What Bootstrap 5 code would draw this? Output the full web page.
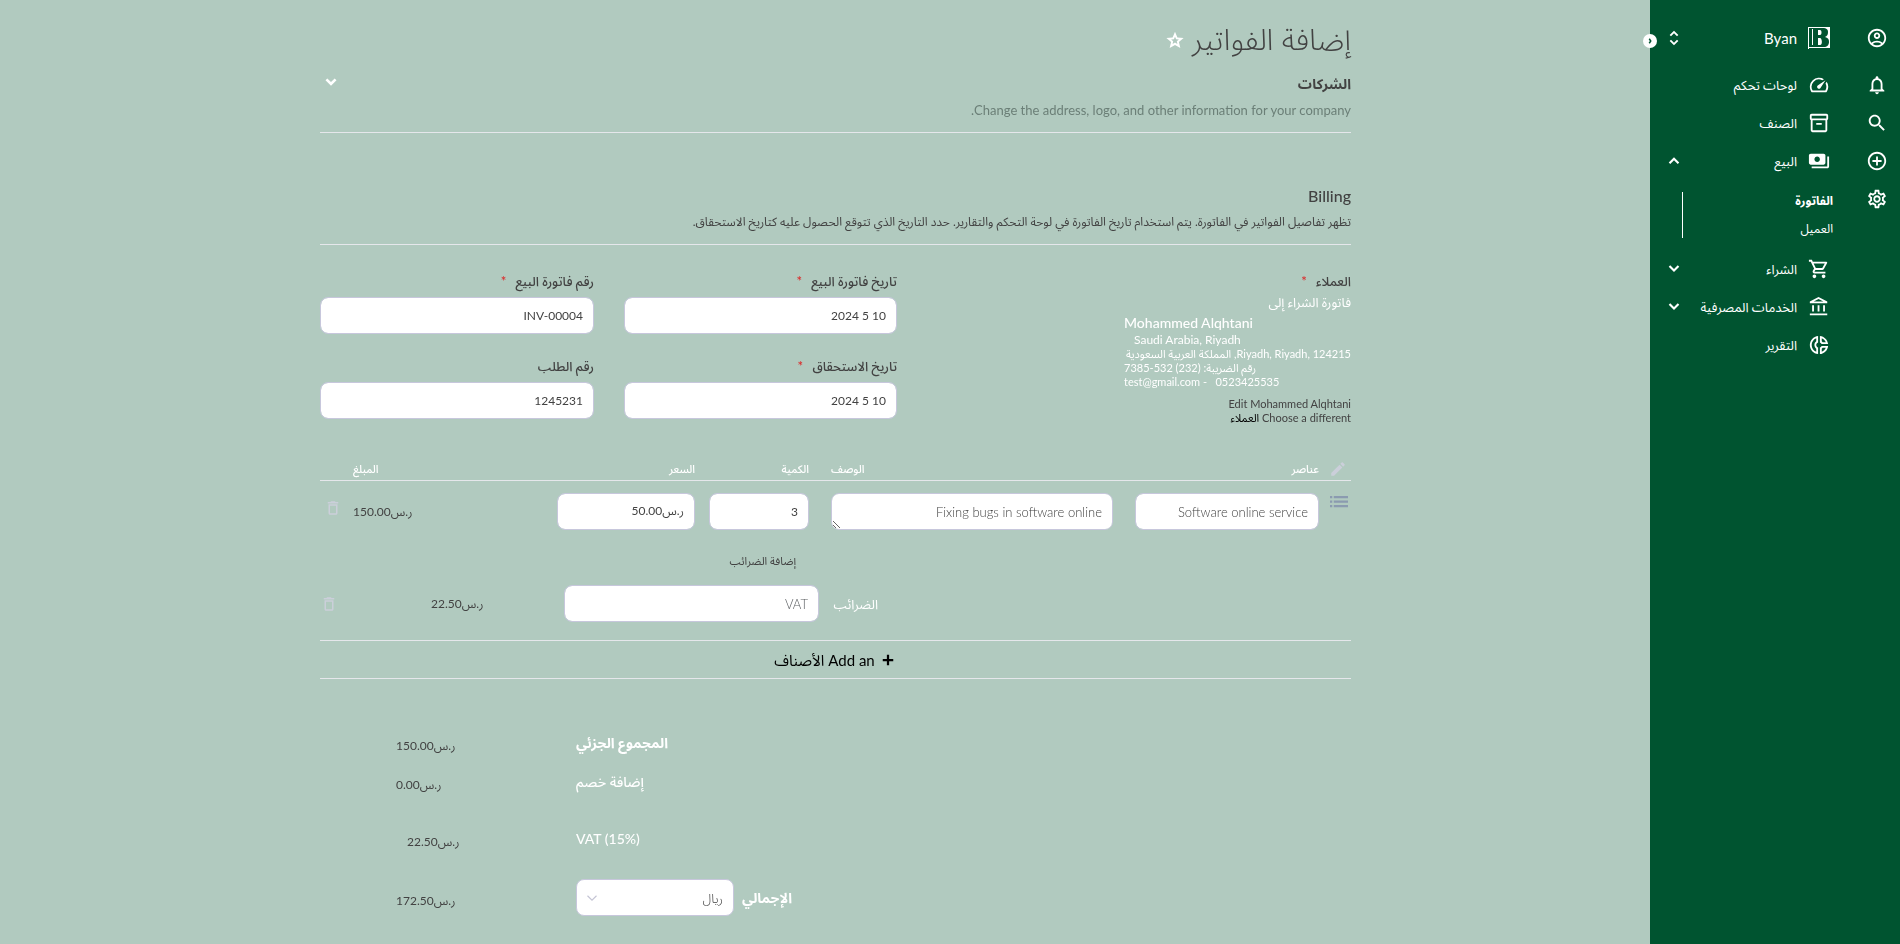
<!DOCTYPE html>
<html lang="ar" dir="rtl">
<head>
<meta charset="utf-8">
<meta name="viewport" content="width=device-width, initial-scale=1">
<title>إضافة الفواتير</title>
<link href="https://cdn.jsdelivr.net/npm/bootstrap@5.3.0/dist/css/bootstrap.min.css" rel="stylesheet">
<style>
  :root { --ink: #424242; --rule: #e5e7eb; --edge: #c7c7dc; --brand: #005430; --page: #b1cabf; }
  body { background: var(--page); color: var(--ink); font-family: Lato, "Noto Sans Arabic", "DejaVu Sans", sans-serif; font-size: 13px; line-height: 20px; }
  button, input, select, textarea { font-family: inherit; }
  .icon { width: 22px; height: 22px; fill: currentColor; flex: none; display: block; }
  .icon-sm { width: 18px; height: 18px; }
  .plain { background: none; border: 0; padding: 0; color: inherit; line-height: inherit; }
  a { color: inherit; text-decoration: none; }
  .medium { font-weight: 500; }

  .side { width: 250px; background: var(--brand); color: #fff; flex: none; }
  .rail { width: 46px; padding-top: 27px; }
  .rail button { height: 38px; }
  .rail button:first-child { height: 39px; padding-bottom: 17px; }
  .menu { padding: 27px 24px 0 15px; }
  .brand-row { height: 22px; margin-bottom: 17px; font-size: 15px; }
  .menu-row { height: 38px; }
  .label-gap { gap: 11px; }
  .submenu { display: flex; align-items: center; margin: 12px -3px 12px 17px; border-left: 1px solid #fff; font-size: 12px; line-height: 28px; height: 46px; }
  .submenu ul { padding: 0; }
  .collapse-btn { position: absolute; left: -7px; top: 34px; width: 14px; height: 14px; border-radius: 50%; background: #fff; color: var(--brand); }

  .page { padding-left: 21px; }
  .sheet { max-width: 1031px; padding-top: 20px; }
  .title-row { margin-bottom: 16px; }
  h1 { font-size: 30px; line-height: 36px; font-weight: 300; margin: 0; }
  h2 { font-size: 16px; line-height: 24px; font-weight: 500; margin: 0 0 4px; }
  h2.ar-head { font-size: 14px; font-weight: 700; }
  .section-head { padding-bottom: 12px; border-bottom: 1px solid var(--rule); }
  .section-head p { margin: 0; }
  .ar-note { font-size: 12px; }
  .soft { color: #6b7f77; }
  .second { margin-top: 51px; }
  .fields { display: grid; grid-template-columns: 424fr 273fr 274fr; gap: 16px 30px; margin-top: 26px; align-items: start; }
  .customer { grid-row: span 2; }
  .field-label { display: block; margin-bottom: 6px; font-weight: 500; }
  .req { color: #dc2626; margin-right: 6px; }
  .form-control, .form-select { height: 37px; border: 1px solid var(--edge); border-radius: 8px; color: var(--ink); font-size: 13px; line-height: 20px; padding: 8px 10px; font-weight: 300; min-height: 0; }
  textarea.form-control { min-height: 0; }
  .form-control.figure-text { font-size: 12px; font-weight: 400; }
  .form-select { background: #fff url("data:image/svg+xml,%3Csvg xmlns='http://www.w3.org/2000/svg' viewBox='0 0 16 16'%3E%3Cpath fill='none' stroke='%23c4c4d4' stroke-width='1.5' d='m2 5 6 6 6-6'/%3E%3C/svg%3E") no-repeat left 9px center / 12px; }
  .bill-to { width: 227px; color: #fff; font-size: 11px; line-height: 14px; }
  .caption-line { font-size: 13px; line-height: 22px; }
  .bill-name { font-size: 14px; line-height: 20px; font-weight: 500; }
  .bill-city { font-size: 12px; padding-left: 10px; }
  .bill-links { font-size: 11px; line-height: 14px; margin-top: 8px; }

  .items { table-layout: fixed; width: 100%; margin-top: 31px; border-bottom: 1px solid var(--rule); }
  .items .c-icon { width: 32px; }
  .items .c-item { width: 206px; }
  .items .c-qty { width: 114px; }
  .items .c-price { width: 138px; }
  .items .c-amount { width: 204px; }
  .items .c-trash { width: 33px; }
  .items th { color: #fff; font-size: 11px; font-weight: 500; line-height: 22px; padding: 2px 0 0; border-bottom: 1px solid var(--rule); }
  .items th.head-tools { padding-right: 4px; }
  .items th.head-wide { padding-left: 22px; }
  .items td { padding: 12px 0 0; vertical-align: top; }
  .items td.cell-wide { padding-left: 22px; }
  .items td.cell-qty { padding-left: 14px; }
  .items td.cell-list { padding: 12px 3px 0 0; }
  .items td.cell-trash { padding: 18px 11px 0 0; }
  .items td.cell-add-tax { padding: 23px 13px 0 0; }
  .items td.cell-tax { padding-top: 16px; }
  .pale { color: #cbcfda; }
  .slate { color: #8b9bb0; }
  .add-tax { font-size: 11px; line-height: 16px; display: block; }
  .tax-line { display: grid; grid-template-columns: 1fr 59px 255px 133px 111px; padding-bottom: 18px; }
  .money { line-height: 37px; font-size: 12px; text-align: left; }
  .add-item { height: 38px; border-bottom: 1px solid var(--rule) !important; color: #000; font-size: 15px; }
  .totals { display: grid; grid-template-columns: 1fr 180px 76px; grid-template-rows: 39px 57px 52px 37px; margin: 52px 0 28px; text-align: left; line-height: 24px; font-size: 14px; }
  .totals dt { grid-column: 1; color: #fff; font-weight: 500; }
  .totals dd { grid-column: 2; margin: 3px 0 0; font-size: 12px; }
  .totals .indent { padding-left: 11px; }
  .totals .grand { line-height: 37px; }
  .currency { width: 158px; }
</style>
</head>
<body>
<div class="d-flex min-vh-100">
  <aside class="side d-flex position-relative">
    <nav class="rail d-flex flex-column align-items-center" aria-label="أدوات">
      <button class="plain" aria-label="الحساب"><svg class="icon" viewBox="0 0 24 24"><path d="M12 2C6.48 2 2 6.48 2 12s4.48 10 10 10 10-4.48 10-10S17.52 2 12 2zM7.35 18.5C8.66 17.56 10.26 17 12 17s3.34.56 4.65 1.5C15.34 19.44 13.74 20 12 20s-3.34-.56-4.65-1.5zm10.79-1.38C16.45 15.8 14.32 15 12 15s-4.45.8-6.14 2.12C4.7 15.73 4 13.95 4 12c0-4.42 3.58-8 8-8s8 3.58 8 8c0 1.95-.7 3.73-1.86 5.12zM12 6c-1.93 0-3.5 1.57-3.5 3.5S10.07 13 12 13s3.5-1.57 3.5-3.5S13.93 6 12 6zm0 5c-.83 0-1.5-.67-1.5-1.5S11.17 8 12 8s1.5.67 1.5 1.5S12.83 11 12 11z"/></svg></button>
      <button class="plain" aria-label="الإشعارات"><svg class="icon" viewBox="0 0 24 24"><path d="M12 22c1.1 0 2-.9 2-2h-4c0 1.1.9 2 2 2zm6-6v-5c0-3.07-1.63-5.64-4.5-6.32V4c0-.83-.67-1.5-1.5-1.5s-1.5.67-1.5 1.5v.68C7.64 5.36 6 7.92 6 11v5l-2 2v1h16v-1l-2-2zm-2 1H8v-6c0-2.48 1.51-4.5 4-4.5s4 2.02 4 4.5v6z"/></svg></button>
      <button class="plain" aria-label="بحث"><svg class="icon" viewBox="0 0 24 24"><path d="M15.5 14h-.79l-.28-.27C15.41 12.59 16 11.11 16 9.5 16 5.91 13.09 3 9.5 3S3 5.91 3 9.5 5.91 16 9.5 16c1.61 0 3.09-.59 4.23-1.57l.27.28v.79l5 4.99L20.49 19l-4.99-5zm-6 0C7.01 14 5 11.99 5 9.5S7.01 5 9.5 5 14 7.01 14 9.5 11.99 14 9.5 14z"/></svg></button>
      <button class="plain" aria-label="جديد"><svg class="icon" viewBox="0 0 24 24"><path d="M13 7h-2v4H7v2h4v4h2v-4h4v-2h-4V7zm-1-5C6.48 2 2 6.48 2 12s4.48 10 10 10 10-4.48 10-10S17.52 2 12 2zm0 18c-4.41 0-8-3.59-8-8s3.59-8 8-8 8 3.59 8 8-3.59 8-8 8z"/></svg></button>
      <button class="plain" aria-label="الإعدادات"><svg class="icon" viewBox="0 0 24 24"><path d="M19.43 12.98c.04-.32.07-.64.07-.98 0-.34-.03-.66-.07-.98l2.11-1.65c.19-.15.24-.42.12-.64l-2-3.46c-.09-.16-.26-.25-.44-.25-.06 0-.12.01-.17.03l-2.49 1c-.52-.4-1.08-.73-1.69-.98l-.38-2.65C14.46 2.18 14.25 2 14 2h-4c-.25 0-.46.18-.49.42l-.38 2.65c-.61.25-1.17.59-1.69.98l-2.49-1c-.06-.02-.12-.03-.18-.03-.17 0-.34.09-.43.25l-2 3.46c-.13.22-.07.49.12.64l2.11 1.65c-.04.32-.07.65-.07.98 0 .33.03.66.07.98l-2.11 1.65c-.19.15-.24.42-.12.64l2 3.46c.09.16.26.25.44.25.06 0 .12-.01.17-.03l2.49-1c.52.4 1.08.73 1.69.98l.38 2.65c.03.24.24.42.49.42h4c.25 0 .46-.18.49-.42l.38-2.65c.61-.25 1.17-.59 1.69-.98l2.49 1c.06.02.12.03.18.03.17 0 .34-.09.43-.25l2-3.46c.12-.22.07-.49-.12-.64l-2.11-1.65zm-1.98-1.71c.04.31.05.52.05.73 0 .21-.02.43-.05.73l-.14 1.13.89.7 1.08.84-.7 1.21-1.27-.51-1.04-.42-.9.68c-.43.32-.84.56-1.25.73l-1.06.43-.16 1.13-.2 1.35h-1.4l-.19-1.35-.16-1.13-1.06-.43c-.43-.18-.83-.41-1.23-.71l-.91-.7-1.06.43-1.27.51-.7-1.21 1.08-.84.89-.7-.14-1.13c-.03-.31-.05-.54-.05-.74s.02-.43.05-.73l.14-1.13-.89-.7-1.08-.84.7-1.21 1.27.51 1.04.42.9-.68c.43-.32.84-.56 1.25-.73l1.06-.43.16-1.13.2-1.35h1.39l.19 1.35.16 1.13 1.06.43c.43.18.83.41 1.23.71l.91.7 1.06-.43 1.27-.51.7 1.21-1.07.85-.89.7.14 1.13zM12 8c-2.21 0-4 1.79-4 4s1.79 4 4 4 4-1.79 4-4-1.79-4-4-4zm0 6c-1.1 0-2-.9-2-2s.9-2 2-2 2 .9 2 2-.9 2-2 2z"/></svg></button>
    </nav>
    <nav class="menu flex-grow-1" aria-label="القائمة">
      <button class="plain brand-row d-flex align-items-center w-100 label-gap">
        <svg class="icon" viewBox="0 0 22 22"><path d="M0 0h1v22H0zM0 20h22v1H0zM0 0h17v1H0zM4 2h1v16H4zM10 3h2c2 0 2 5 0 5h-2zM10 11h2c2 0 3 7 0 7h-2zM15 0h7v20h-6c3 0 5-2 5-5s-1-4-4-5c2-1 3-2 3-5S18 1 15 1z"/></svg>
        <span>Byan</span>
        <svg class="icon icon-sm me-auto" viewBox="0 0 24 24"><path d="M12 5.830L16 9.800l1.800-1.800L12 2.200 6.200 8 8 9.800zM12 18.170L8 14.200 6.200 16l5.800 5.800 5.800-5.800-1.800-1.800z"/></svg>
      </button>
      <a href="#" class="menu-row d-flex align-items-center label-gap"><svg class="icon" viewBox="0 0 24 24"><path d="M20.38 8.57l-1.23 1.85a8 8 0 0 1-.22 7.58H5.07A8 8 0 0 1 15.58 6.85l1.85-1.23A10 10 0 0 0 3.35 19a2 2 0 0 0 1.72 1h13.85a2 2 0 0 0 1.74-1 10 10 0 0 0-.27-10.44zM10.59 15.41a2 2 0 0 0 2.83 0l5.66-8.49-8.49 5.66a2 2 0 0 0 0 2.83z"/></svg><span>لوحات تحكم</span></a>
      <a href="#" class="menu-row d-flex align-items-center label-gap"><svg class="icon" viewBox="0 0 24 24"><path d="M20 2H4c-1 0-2 .9-2 2v3.01c0 .72.43 1.34 1 1.69V20c0 1.1 1.1 2 2 2h14c.9 0 2-.9 2-2V8.7c.57-.35 1-.97 1-1.69V4c0-1.1-1-2-2-2zm-1 18H5V9h14v11zm1-13H4V4h16v3zM9 12h6v2H9z"/></svg><span>الصنف</span></a>
      <button class="plain w-100 menu-row d-flex align-items-center label-gap"><svg class="icon" viewBox="0 0 24 24"><path d="M19 14V6c0-1.1-.9-2-2-2H3c-1.1 0-2 .9-2 2v8c0 1.1.9 2 2 2h14c1.1 0 2-.9 2-2zm-9-1c-1.66 0-3-1.34-3-3s1.34-3 3-3 3 1.34 3 3-1.34 3-3 3zm13-6v11c0 1.1-.9 2-2 2H4v-2h17V7h2z"/></svg><span>البيع</span><svg class="icon icon-sm me-auto" viewBox="0 0 24 24"><path d="m12 7-7 7 2 2 5-5 5 5 2-2z"/></svg></button>
      <div class="submenu"><ul class="list-unstyled mb-0"><li><a href="#" class="fw-bold">الفاتورة</a></li><li><a href="#">العميل</a></li></ul></div>
      <button class="plain w-100 menu-row d-flex align-items-center label-gap"><svg class="icon" viewBox="0 0 24 24"><path d="M15.55 13c.75 0 1.41-.41 1.75-1.03l3.58-6.49c.37-.66-.11-1.48-.87-1.48H5.21l-.94-2H1v2h2l3.6 7.59-1.35 2.44C4.52 15.37 5.48 17 7 17h12v-2H7l1.1-2h7.45zM6.16 6h12.15l-2.76 5H8.53L6.16 6zM7 18c-1.1 0-1.99.9-1.99 2S5.9 22 7 22s2-.9 2-2-.9-2-2-2zm10 0c-1.1 0-1.99.9-1.99 2s.89 2 1.99 2 2-.9 2-2-.9-2-2-2z"/></svg><span>الشراء</span><svg class="icon icon-sm me-auto" viewBox="0 0 24 24"><path d="m12 16-7-7 2-2 5 5 5-5 2 2z"/></svg></button>
      <button class="plain w-100 menu-row d-flex align-items-center label-gap"><svg class="icon" viewBox="0 0 24 24"><path d="M6.5 10h-2v7h2v-7zm6 0h-2v7h2v-7zm8.5 9H2v2h19v-2zm-2.500-9h-2v7h2v-7zm-7-6.740L16.710 6H6.290l5.210-2.740m0-2.260L2 6v2h19V6l-9.500-5z"/></svg><span>الخدمات المصرفية</span><svg class="icon icon-sm me-auto" viewBox="0 0 24 24"><path d="m12 16-7-7 2-2 5 5 5-5 2 2z"/></svg></button>
      <a href="#" class="menu-row d-flex align-items-center label-gap"><svg class="icon" viewBox="0 0 24 24"><path d="M14.82 11h7.13c-.47-4.72-4.23-8.48-8.95-8.95v7.13c.85.31 1.51.97 1.82 1.82zM15 4.58C17 5.4 18.6 7 19.42 9h-3.43c-.28-.37-.62-.71-.99-.99V4.58zM2 12c0 5.19 3.95 9.45 9 9.95v-7.13C9.84 14.4 9 13.3 9 12c0-1.3.84-2.4 2-2.82V2.05c-5.05.5-9 4.76-9 9.95zm7-7.42v3.43c-1.23.92-2 2.39-2 3.99 0 1.6.77 3.07 2 3.99v3.43C6.04 18.22 4 15.34 4 12s2.04-6.22 5-7.42zm4 10.24v7.13c4.72-.47 8.48-4.23 8.950-8.950h-7.130c-.31.85-.97 1.510-1.820 1.820zm2 1.170c.37-.28.71-.61.99-.99h3.430C18.600 17 17 18.600 15 19.420v-3.430z"/></svg><span>التقرير</span></a>
    </nav>
    <button class="plain collapse-btn" aria-label="طي القائمة"><svg class="d-block m-auto" width="6" height="6" viewBox="0 0 8 8" fill="none" stroke="currentColor" stroke-width="2"><path d="m3 1 2 3-2 3"/></svg></button>
  </aside>

  <main class="page flex-grow-1">
    <div class="sheet mx-auto">
      <div class="title-row d-flex align-items-center gap-2">
        <h1>إضافة الفواتير</h1>
        <button class="plain text-white pt-1" aria-label="المفضلة"><svg class="icon icon-sm" viewBox="0 0 24 24"><path d="M12 1l3.200 7.600 8.300.7-6.300 5.400 1.900 8.100L12 18.500l-7.100 4.300 1.900-8.100L.5 9.300l8.300-.7zM12 7.500l-1.500 3.400-3.700.3 2.800 2.500-.8 3.600 3.200-1.900 3.200 1.900-.8-3.600 2.800-2.500-3.700-.3z"/></svg></button>
      </div>
      <section class="section-head d-flex justify-content-between align-items-start">
        <div><h2 class="ar-head">الشركات</h2><p class="soft">Change the address, logo, and other information for your company.</p></div>
        <button class="plain text-white" aria-label="توسيع"><svg class="icon" viewBox="0 0 24 24"><path d="m12 15-6-6 2-2 4 4 4-4 2 2z"/></svg></button>
      </section>

      <section class="section-head second">
        <h2>Billing</h2>
        <p class="ar-note">تظهر تفاصيل الفواتير في الفاتورة. يتم استخدام تاريخ الفاتورة في لوحة التحكم والتقارير. حدد التاريخ الذي تتوقع الحصول عليه كتاريخ الاستحقاق.</p>
      </section>

      <form class="fields">
        <div class="customer">
          <div class="medium">العملاء <span class="req">*</span></div>
          <div class="bill-to">
            <div class="caption-line">فاتورة الشراء إلى</div>
            <div dir="ltr" class="bill-name">Mohammed Alqhtani</div>
            <div dir="ltr" class="bill-city">Saudi Arabia, Riyadh</div>
            <div class="text-nowrap">Riyadh, Riyadh, 124215, المملكة العربية السعودية</div>
            <div class="text-start">رقم الضريبة: (232) 532-7385</div>
            <div dir="ltr">test@gmail.com - &nbsp; 0523425535</div>
          </div>
          <div class="bill-links"><a href="#" class="d-block">Edit Mohammed Alqhtani</a><a href="#" class="d-block">Choose a different <span class="text-black">العملاء</span></a></div>
        </div>
        <div><label class="field-label" for="inv-date">تاريخ فاتورة البيع <span class="req">*</span></label><input id="inv-date" class="form-control figure-text" value="10 5 2024"></div>
        <div><label class="field-label" for="inv-no">رقم فاتورة البيع <span class="req">*</span></label><input id="inv-no" class="form-control figure-text" value="INV-00004"></div>
        <div><label class="field-label" for="due-date">تاريخ الاستحقاق <span class="req">*</span></label><input id="due-date" class="form-control figure-text" value="10 5 2024"></div>
        <div><label class="field-label" for="order-no">رقم الطلب</label><input id="order-no" class="form-control figure-text" value="1245231"></div>
      </form>

      <table class="items">
        <colgroup><col class="c-icon"><col class="c-item"><col><col class="c-qty"><col class="c-price"><col class="c-amount"><col class="c-trash"></colgroup>
        <thead><tr>
          <th class="head-tools"><button class="plain pale d-block" aria-label="تعديل الأعمدة"><svg class="icon icon-sm" viewBox="0 0 24 24"><path d="M3 17.25V21h3.750L17.810 9.940l-3.750-3.750L3 17.250zM20.710 7.040c.39-.39.39-1.020 0-1.410l-2.340-2.340c-.39-.39-1.020-.39-1.410 0l-1.830 1.830 3.750 3.750 1.830-1.830z"/></svg></button></th>
          <th>عناصر</th><th class="text-start head-wide">الوصف</th><th>الكمية</th><th>السعر</th><th class="text-start">المبلغ</th><th></th>
        </tr></thead>
        <tbody>
          <tr>
            <td class="cell-list"><svg class="icon icon-sm slate" viewBox="0 0 24 24"><path d="M0 4h3v3H0zM5 4h19v3H5zM0 10h3v3H0zM5 10h19v3H5zM0 16h3v3H0zM5 16h19v3H5z"/></svg></td>
            <td class="cell-wide"><input class="form-control" aria-label="عناصر" value="Software online service"></td>
            <td class="cell-wide"><textarea class="form-control" rows="1" aria-label="الوصف">Fixing bugs in software online</textarea></td>
            <td class="cell-qty"><input class="form-control figure-text" aria-label="الكمية" value="3"></td>
            <td><input class="form-control figure-text" aria-label="السعر" value="ر.س50.00"></td>
            <td class="money">ر.س150.00</td>
            <td class="cell-trash"><button class="plain pale" aria-label="حذف"><svg class="icon icon-sm" viewBox="0 0 24 24"><path d="M6 19c0 1.100.9 2 2 2h8c1.100 0 2-.9 2-2V7H6v12zM8 9h8v10H8V9zm7.500-5l-1-1h-5l-1 1H5v2h14V4z"/></svg></button></td>
          </tr>
          <tr><td colspan="3"></td><td colspan="4" class="cell-add-tax"><button type="button" class="plain add-tax">إضافة الضرائب</button></td></tr>
          <tr><td colspan="7" class="cell-tax"><div class="tax-line">
            <span></span><label for="tax" class="text-white align-self-center">الضرائب</label><input id="tax" class="form-control" placeholder="VAT"><span class="money">ر.س22.50</span>
            <button class="plain pale me-auto align-self-center" aria-label="حذف الضريبة"><svg class="icon icon-sm" viewBox="0 0 24 24"><path d="M6 19c0 1.100.9 2 2 2h8c1.100 0 2-.9 2-2V7H6v12zM8 9h8v10H8V9zm7.500-5l-1-1h-5l-1 1H5v2h14V4z"/></svg></button>
          </div></td></tr>
        </tbody>
      </table>
      <button class="plain add-item w-100 d-flex justify-content-center align-items-center gap-1"><svg class="icon icon-sm" viewBox="0 0 24 24"><path d="M19 13.500h-5.500V19h-3v-5.500H5v-3h5.500V5h3v5.500H19z"/></svg>Add an الأصناف</button>

      <dl class="totals">
        <dt class="fw-bold">المجموع الجزئي</dt><dd>ر.س150.00</dd>
        <dt>إضافة خصم</dt><dd>ر.س0.00</dd>
        <dt dir="ltr">VAT (15%)</dt><dd class="indent">ر.س22.50</dd>
        <dt class="d-flex justify-content-end align-items-center gap-2"><label for="cur" class="fw-bold">الإجمالي</label><select id="cur" class="form-select currency"><option>ريال</option></select></dt><dd class="grand">ر.س172.50</dd>
      </dl>
    </div>
  </main>
</div>
<script src="https://cdn.jsdelivr.net/npm/bootstrap@5.3.0/dist/js/bootstrap.bundle.min.js"></script>
</body>
</html>
